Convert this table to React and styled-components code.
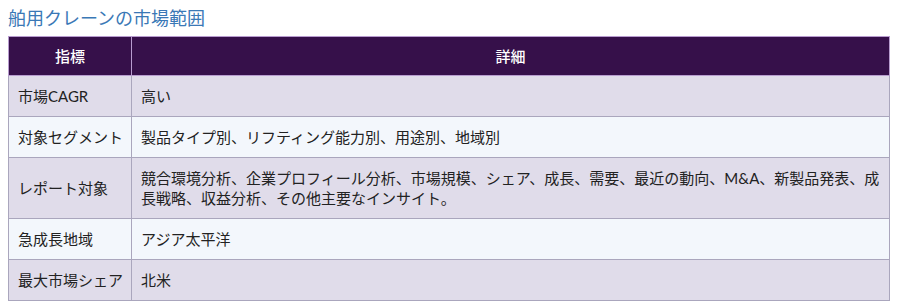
import React from 'react';
import styled, { createGlobalStyle } from 'styled-components';

const GlobalStyle = createGlobalStyle`
  body {
    margin: 0;
    background: #ffffff;
    font-family: Lato, "Noto Sans CJK JP", sans-serif;
  }
`;

const Page = styled.div`
  padding: 6px 8px 8px 8px;
`;

const Title = styled.h2`
  margin: 0 0 6px 0;
  font-size: 18px;
  line-height: 24px;
  font-weight: 400;
  color: #3a78b6;
`;

const Table = styled.table`
  width: 100%;
  border-collapse: collapse;
  font-size: 15px;
  color: #222222;
`;

const HeadCell = styled.th`
  background: #36104a;
  color: #ffffff;
  font-weight: 500;
  text-align: center;
  padding: 10px 10px;
  line-height: 18px;
  border: 1px solid #b89ccf;
  width: ${p => p.$width || 'auto'};
`;

const Row = styled.tr`
  background: ${p => (p.$odd ? '#e0dcea' : '#f3f7fc')};
`;

const Cell = styled.td`
  padding: 10px 8px 10px 9px;
  line-height: 20px;
  border: 1px solid #aaa6bd;
  vertical-align: middle;
  white-space: ${p => (p.$nowrap ? 'nowrap' : 'normal')};
`;

const rows = [
  ['市場CAGR', '高い'],
  ['対象セグメント', '製品タイプ別、リフティング能力別、用途別、地域別'],
  ['レポート対象', '競合環境分析、企業プロフィール分析、市場規模、シェア、成長、需要、最近の動向、M&A、新製品発表、成長戦略、収益分析、その他主要なインサイト。'],
  ['急成長地域', 'アジア太平洋'],
  ['最大市場シェア', '北米'],
];

const App = () => (
  <Page>
    <GlobalStyle />
    <Title>舶用クレーンの市場範囲</Title>
    <Table>
      <thead>
        <tr>
          <HeadCell $width="101px">指標</HeadCell>
          <HeadCell>詳細</HeadCell>
        </tr>
      </thead>
      <tbody>
        {rows.map(([label, detail], i) => (
          <Row key={label} $odd={i % 2 === 0}>
            <Cell $nowrap>{label}</Cell>
            <Cell>{detail}</Cell>
          </Row>
        ))}
      </tbody>
    </Table>
  </Page>
);

export default App;
